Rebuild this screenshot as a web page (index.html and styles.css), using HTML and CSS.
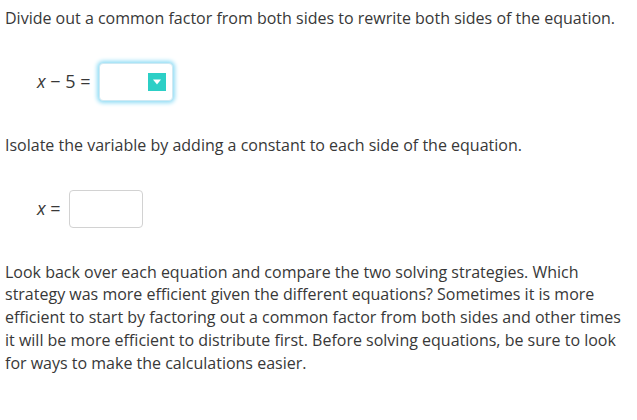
FILE: index.html
```html
<!DOCTYPE html>
<html>
<head>
<meta charset="utf-8">
<link rel="stylesheet" href="styles.css">
</head>
<body>
<div class="page">
  <p class="text">Divide out a common factor from both sides to rewrite both sides of the equation.</p>
  <div class="eq">
    <span class="math"><i>x</i> − 5 =</span>
    <div class="box select"><span class="arrow"><svg width="10" height="6" viewBox="0 0 10 6"><path d="M1 0.5h8L5 5.5z" fill="#fff"/></svg></span></div>
  </div>
  <p class="text">Isolate the variable by adding a constant to each side of the equation.</p>
  <div class="eq">
    <span class="math"><i>x</i> =</span>
    <div class="box"></div>
  </div>
  <p class="text">Look back over each equation and compare the two solving strategies. Which strategy was more efficient given the different equations? Sometimes it is more efficient to start by factoring out a common factor from both sides and other times it will be more efficient to distribute first. Before solving equations, be sure to look for ways to make the calculations easier.</p>
</div>
</body>
</html>
```

FILE: styles.css
```css
html, body { margin: 0; padding: 0; background: #fff; }
.page {
  padding: 7px 5px 0 5px;
  font-family: "Open Sans", "Liberation Sans", sans-serif;
  font-size: 16px;
  line-height: 22.75px;
  color: #383838;
}
.text { margin: 0; }
.eq {
  display: flex;
  align-items: center;
  gap: 8px;
  padding-left: 32px;
  margin: 33px 0;
  height: 38px;
}
.math { font-size: 18px; color: #383838; white-space: nowrap; }
.math i { font-style: italic; }
.box {
  width: 72px;
  height: 36px;
  border: 1px solid #d2d2d2;
  border-radius: 4px;
  background: #fff;
  display: flex;
  align-items: center;
  justify-content: flex-end;
}
.select {
  border-color: #cfe9f3;
  box-shadow: 0 0 4px 2px #8fdcf5;
}
.arrow {
  width: 18px;
  height: 18px;
  background: #2ccfc6;
  margin-right: 6px;
  display: flex;
  align-items: center;
  justify-content: center;
}
```
